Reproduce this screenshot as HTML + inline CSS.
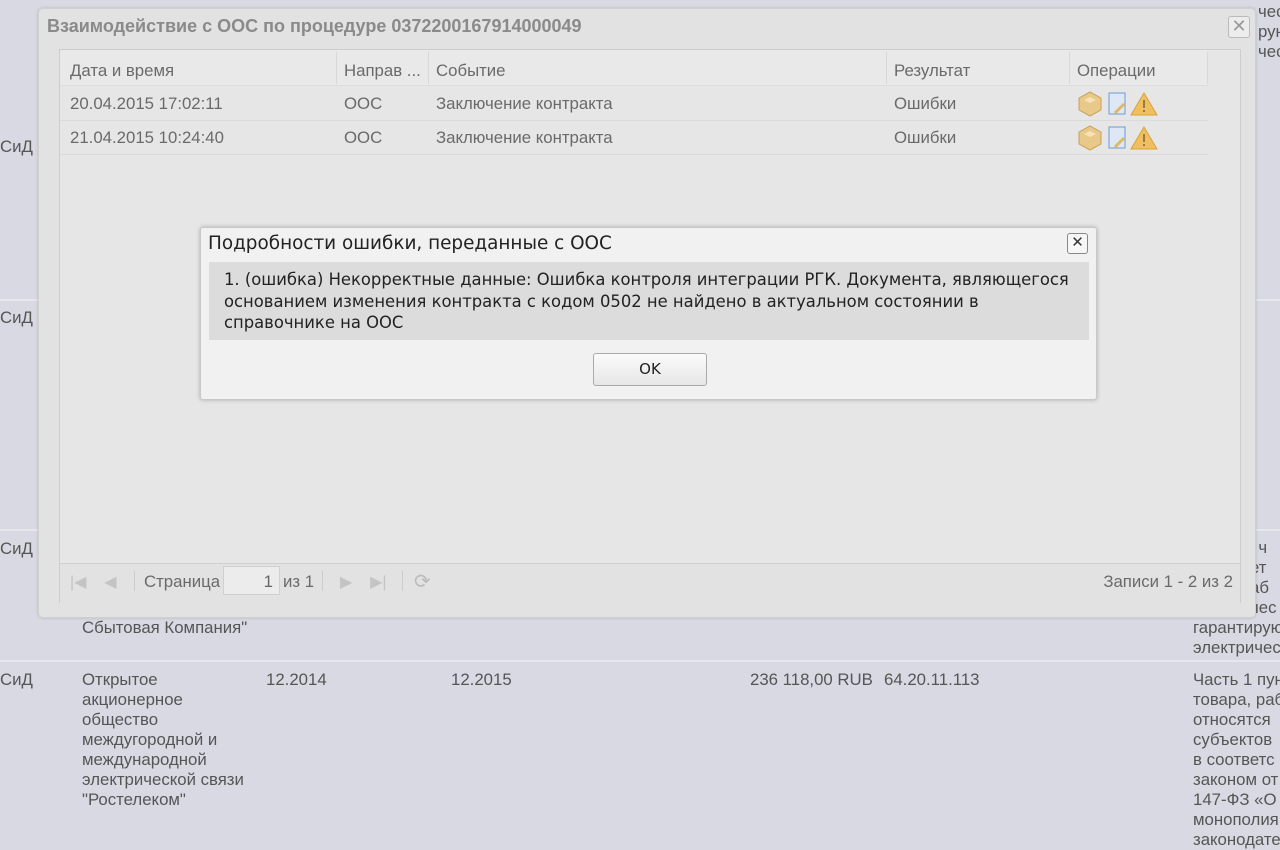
<!DOCTYPE html>
<html><head><meta charset="utf-8"><style>
*{box-sizing:border-box;margin:0;padding:0}
body{width:1280px;height:837px;overflow:hidden;background:#d9d9e3;font-family:"Liberation Sans",sans-serif;font-size:16.8px;color:#555;position:relative}
.a{position:absolute;white-space:nowrap}
.hl{position:absolute;left:0;width:1280px;height:2px;background:#e6e6ec}
.dlg{position:absolute;left:38px;top:8px;width:1218px;height:610px;background:#e2e2e2;border:1px solid #cfcfcf;border-radius:5px;box-shadow:0 0 3px rgba(0,0,0,.15)}
.inner{position:absolute;left:20px;top:40px;width:1182px;height:554px;border:1px solid #cdcdcd;background:#e6e6e6}
.g{position:absolute;color:#6a6a6a;white-space:nowrap}
.ico{position:absolute}
</style></head><body>
<div class="hl" style="top:299px"></div>
<div class="hl" style="top:529px"></div>
<div class="hl" style="top:660px"></div>
<div class="a" style="left:0;top:137px">СиД</div>
<div class="a" style="left:0;top:308px">СиД</div>
<div class="a" style="left:0;top:539px">СиД</div>
<div class="a" style="left:0;top:670px">СиД</div>
<div class="a" style="left:82px;top:618px">Сбытовая Компания"</div>
<div class="a" style="left:82px;top:670px;line-height:20px">Открытое<br>акционерное<br>общество<br>междугородной и<br>международной<br>электрической связи<br>"Ростелеком"</div>
<div class="a" style="left:266px;top:670px">12.2014</div>
<div class="a" style="left:451px;top:670px">12.2015</div>
<div class="a" style="left:750px;top:670px">236 118,00 RUB</div>
<div class="a" style="left:884px;top:670px">64.20.11.113</div>
<div class="a" style="left:1193px;top:670px;line-height:20px">Часть 1 пун<br>товара, раб<br>относятся<br>субъектов<br>в соответс<br>законом от<br>147-ФЗ «О<br>монополия<br>законодате</div>
<div class="a" style="left:1258px;top:2px;line-height:20px">чес<br>рую<br>чес</div>
<div class="a" style="left:1250px;top:538px;line-height:20px">l ч<br>ет<br>аб<br>чес</div>
<div class="a" style="left:1193px;top:618px;line-height:20px">гарантирую<br>электричес</div>

<div class="dlg">
 <div class="a" style="left:8px;top:7px;font-weight:bold;font-size:18px;color:#8a8a8a">Взаимодействие с ООС по процедуре 0372200167914000049</div>
 <div class="a" style="left:1189px;top:7px;width:22px;height:22px;border:1px solid #bbb;border-radius:3px;background:#ececec;color:#999;font-size:18px;text-align:center;line-height:19px">✕</div>
 <div class="inner">
  <div style="position:absolute;left:0;top:0;width:1148px;height:36px;background:#e9e9e9;border-bottom:1px solid #ddd"></div>
  <div class="g" style="left:10px;top:11px">Дата и время</div>
  <div class="g" style="left:284px;top:11px">Направ ...</div>
  <div class="g" style="left:376px;top:11px">Событие</div>
  <div class="g" style="left:834px;top:11px">Результат</div>
  <div class="g" style="left:1017px;top:11px">Операции</div>
  <div style="position:absolute;left:276px;top:2px;width:1px;height:32px;background:#d8d8d8"></div>
  <div style="position:absolute;left:368px;top:2px;width:1px;height:32px;background:#d8d8d8"></div>
  <div style="position:absolute;left:826px;top:2px;width:1px;height:32px;background:#d8d8d8"></div>
  <div style="position:absolute;left:1009px;top:2px;width:1px;height:32px;background:#d8d8d8"></div>
  <div style="position:absolute;left:1147px;top:2px;width:1px;height:32px;background:#d8d8d8"></div>
  <div style="position:absolute;left:0;top:70px;width:1148px;height:1px;background:#dadada"></div>
  <div style="position:absolute;left:0;top:104px;width:1148px;height:1px;background:#dadada"></div>
  <div class="g" style="left:10px;top:44px">20.04.2015 17:02:11</div>
  <div class="g" style="left:284px;top:44px">ООС</div>
  <div class="g" style="left:376px;top:44px">Заключение контракта</div>
  <div class="g" style="left:834px;top:44px">Ошибки</div>
  <div class="g" style="left:10px;top:78px">21.04.2015 10:24:40</div>
  <div class="g" style="left:284px;top:78px">ООС</div>
  <div class="g" style="left:376px;top:78px">Заключение контракта</div>
  <div class="g" style="left:834px;top:78px">Ошибки</div>
  <svg class="ico" style="left:1018px;top:41px" width="90" height="60">
   <g id="r"><polygon points="12,1 23,7 23,19 12,25 1,19 1,7" fill="#e8c98a" stroke="#c9a25a"/><polygon points="12,6 18,9 12,12 6,9" fill="#f5e2b8"/>
   <rect x="31" y="2" width="16" height="21" fill="#dde8f4" stroke="#6f9ad0"/><path d="M37 22 L46 13" stroke="#e0b860" stroke-width="3"/>
   <polygon points="66,2 79,24 53,24" fill="#f0c060" stroke="#d9a23a"/><rect x="65" y="9" width="2" height="8" fill="#9a7a40"/><rect x="65" y="19" width="2" height="2" fill="#9a7a40"/></g>
   <use href="#r" y="34"/>
  </svg>
  <div style="position:absolute;left:0;top:513px;width:1180px;height:40px;background:#e2e2e2;border-top:1px solid #d0d0d0"></div>
  <div class="g" style="left:10px;top:522px;color:#c4c4c4;font-size:16px">|◀&nbsp;&nbsp;&nbsp;&nbsp;◀</div>
  <div style="position:absolute;left:74px;top:521px;width:1px;height:20px;background:#ccc"></div>
  <div class="g" style="left:84px;top:522px">Страница</div>
  <div style="position:absolute;left:163px;top:516px;width:57px;height:29px;background:#ececec;border:1px solid #d0d0d0;text-align:right;padding:5px 6px 0 0;color:#666">1</div>
  <div class="g" style="left:223px;top:522px">из 1</div>
  <div style="position:absolute;left:262px;top:521px;width:1px;height:20px;background:#ccc"></div>
  <div class="g" style="left:280px;top:522px;color:#c4c4c4;font-size:16px">▶&nbsp;&nbsp;&nbsp;&nbsp;▶|</div>
  <div style="position:absolute;left:342px;top:521px;width:1px;height:20px;background:#ccc"></div>
  <div class="g" style="left:354px;top:519px;color:#bbb;font-size:20px">⟳</div>
  <div class="g" style="right:7px;top:522px">Записи 1 - 2 из 2</div>
 </div>
</div>

<div style="position:absolute;left:200px;top:227px;width:897px;height:173px;background:#f1f1f1;border:1px solid #c8c8c8;border-radius:3px;box-shadow:0 0 4px rgba(0,0,0,.25)">
 <div class="a" style="left:7px;top:5px;font-family:'DejaVu Sans',sans-serif;font-size:18.4px;color:#222">Подробности ошибки, переданные с ООС</div>
 <div class="a" style="left:866px;top:5px;width:21px;height:21px;border:1px solid #888;border-radius:3px;background:#f6f6f6;text-align:center;line-height:18px;font-size:15px;color:#333">✕</div>
 <div style="position:absolute;left:8px;top:34px;width:880px;height:78px;background:#dcdcdc;padding:7px 0 0 15px;font-family:'DejaVu Sans',sans-serif;font-size:16.4px;line-height:21.5px;color:#222;white-space:nowrap">1. (ошибка) Некорректные данные: Ошибка контроля интеграции РГК. Документа, являющегося<br>основанием изменения контракта с кодом 0502 не найдено в актуальном состоянии в<br>справочнике на ООС</div>
 <div style="position:absolute;left:392px;top:125px;width:114px;height:33px;border:1px solid #aaa;border-radius:3px;background:linear-gradient(#fbfbfb,#e6e6e6);text-align:center;line-height:31px;font-family:'DejaVu Sans',sans-serif;font-size:15px;color:#222">OK</div>
</div>
</body></html>
